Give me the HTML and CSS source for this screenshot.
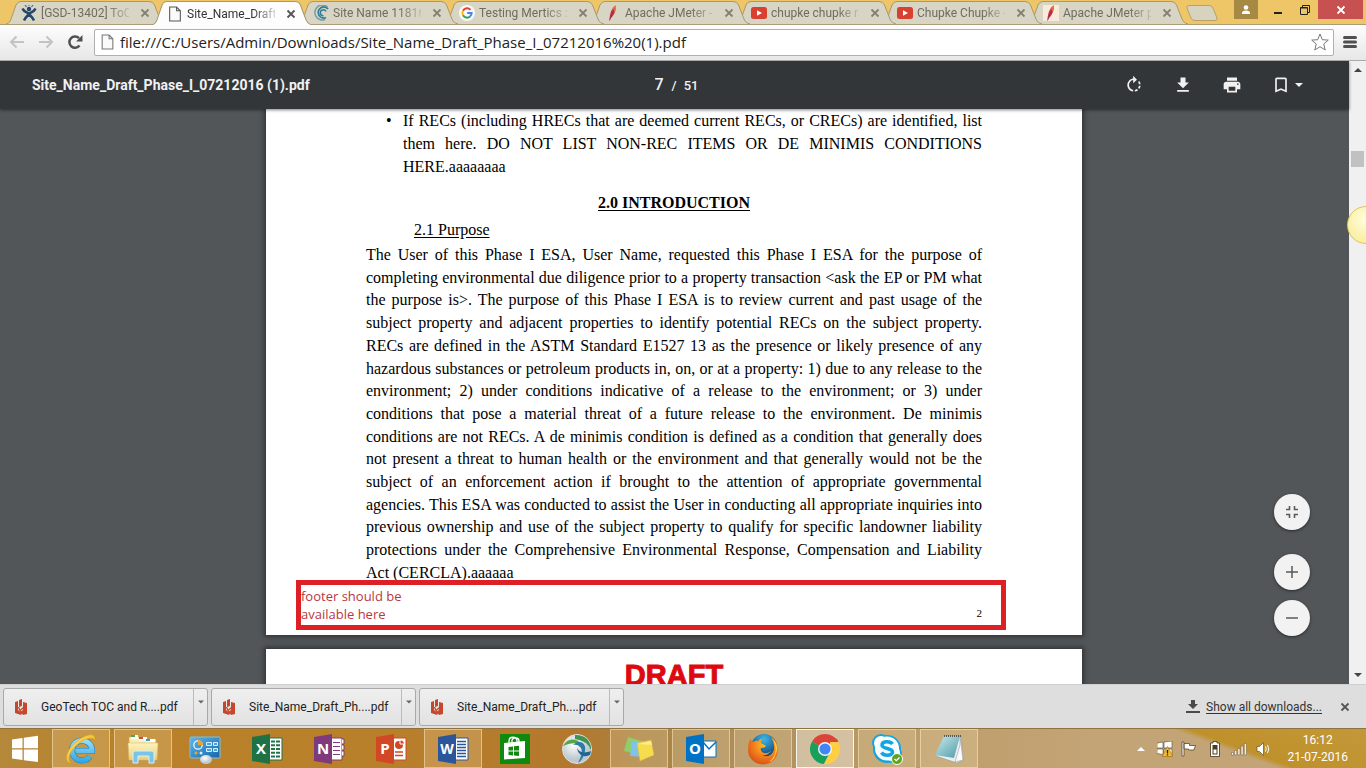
FILE: index.html
```html
<!DOCTYPE html>
<html lang="en">
<head>
<meta charset="utf-8">
<title>Site_Name_Draft_Phase_I_07212016 (1).pdf</title>
<link rel="stylesheet" href="styles.css">
</head>
<body>
<svg class="defs" aria-hidden="true">
  <defs>
    <linearGradient id="gold" x1="0" y1="0" x2="1" y2="1"><stop offset="0" stop-color="#ffe46b"/><stop offset="1" stop-color="#e9a20c"/></linearGradient>
    <linearGradient id="iblue" gradientUnits="userSpaceOnUse" x1="0" y1="5" x2="0" y2="30"><stop offset="0" stop-color="#9fe4fb"/><stop offset="1" stop-color="#2fa5e0"/></linearGradient>
    <linearGradient id="folder" x1="0" y1="0" x2="0" y2="1"><stop offset="0" stop-color="#fdf3bc"/><stop offset="1" stop-color="#e9cf7c"/></linearGradient>
    <linearGradient id="panel" x1="0" y1="0" x2="1" y2="1"><stop offset="0" stop-color="#5db7ea"/><stop offset="1" stop-color="#1467ab"/></linearGradient>
    <radialGradient id="ball" cx=".4" cy=".35"><stop offset="0" stop-color="#ffffff"/><stop offset="1" stop-color="#bfc9cf"/></radialGradient>
    <radialGradient id="fox" cx=".6" cy=".3" r=".8"><stop offset="0" stop-color="#ffc829"/><stop offset=".5" stop-color="#f2821c"/><stop offset="1" stop-color="#d5431a"/></radialGradient>
    <radialGradient id="globe" cx=".5" cy=".2" r=".8"><stop offset="0" stop-color="#3fb7e4"/><stop offset="1" stop-color="#0b2f66"/></radialGradient>
    <linearGradient id="pad" x1="0" y1="0" x2="1" y2="1"><stop offset="0" stop-color="#c9ecef"/><stop offset="1" stop-color="#4f9aa5"/></linearGradient>
  </defs>
  <symbol id="tab-shape" viewBox="0 0 160 24" preserveAspectRatio="none"><path d="M0 24C3 23 4 22 5 19L10 5Q11.500 1.500 15 1.500H143Q147 1.500 148.500 5L154 19C155 22 157 23 160 24" stroke="#a9986a" stroke-width="1"/></symbol>
  <symbol id="x" viewBox="0 0 10 10"><path d="M1.500 1.500L8.500 8.500M8.500 1.500L1.500 8.500" fill="none" stroke="currentColor" stroke-width="1.800"/></symbol>
  <symbol id="file" viewBox="0 0 12 15"><path d="M1 1H7.500L11 4.500V14H1ZM7.500 1V4.500H11" fill="#fafafa" stroke="currentColor"/></symbol>
  <symbol id="youtube" viewBox="0 0 16 16"><rect y="2" width="16" height="12" rx="2.500" fill="#d8402f"/><path d="M6 5.200L11 8L6 10.800Z" fill="#fff"/></symbol>
  <symbol id="feather" viewBox="0 0 16 16"><path d="M4.500 15.500C4.500 9 6.500 3 10.500.5C12 3 9.500 10 6 13Z" fill="#c9314b"/><path d="M7.500 5C8.500 3 9.500 1.200 10.500.5C11.300 2 10.800 4 9.800 6.500Z" fill="#ef8136"/><path d="M4.500 15.500L9.300 3.500" stroke="#7f2b63" stroke-width=".7"/></symbol>
  <symbol id="pdf" viewBox="0 0 12 16"><path d="M0 3L3 2V11L7 14L6 16L0 14ZM4 1L7 0V7L4 8ZM8 3L12 4V15L8 16L6 13C8 12 8 10 8 9Z" fill="#c5482c"/><path d="M3.500 8L5 11.500L8.500 8.500M5 11.500L7.500 14" fill="none" stroke="#c5482c" stroke-width="1.300"/></symbol>
  <symbol id="caret" viewBox="0 0 8 4"><path d="M0 0H8L4 4Z" fill="currentColor"/></symbol>
  <symbol id="caret-up" viewBox="0 0 8 4"><path d="M0 4H8L4 0Z" fill="currentColor"/></symbol>
</svg>

<header class="tabstrip">
  <div class="tabs" role="tablist">
    <div class="tab" role="tab"><svg class="tab-bg"><use href="#tab-shape"/></svg>
      <svg class="favicon" viewBox="0 0 16 16"><path d="M1.500 3.500C3 7 6 7.500 8 8.500C10 7.500 13 7 14.500 3.500M8 8.500C7 11.500 5 11 3 15.500M8 8.500C9 11.500 11 11 13 15.500" fill="none" stroke="#23466b" stroke-width="2.500"/><circle cx="8" cy="4" r="2.200" fill="#23466b"/><path d="M4 0L5.500 2M12 0L10.500 2M7 0H9" stroke="#466a8b" stroke-width="1.200"/></svg>
      <span class="tab-title">[GSD-13402] ToC</span><button class="tab-close" aria-label="Close tab"><svg><use href="#x"/></svg></button></div>
    <div class="tab active" role="tab" aria-selected="true"><svg class="tab-bg"><use href="#tab-shape"/></svg>
      <svg class="favicon"><use href="#file"/></svg>
      <span class="tab-title">Site_Name_Draft_</span><button class="tab-close" aria-label="Close tab"><svg><use href="#x"/></svg></button></div>
    <div class="tab" role="tab"><svg class="tab-bg"><use href="#tab-shape"/></svg>
      <svg class="favicon" viewBox="0 0 16 16"><g fill="none" stroke="#2f7d98"><path d="M14.500 2A7.500 7.500 0 1 0 12 14.500" stroke-width="1.500" opacity=".6"/><path d="M15 4A5.500 5.500 0 1 0 13 12.500" stroke-width="1.800"/><path d="M13 6.500A3 3 0 1 0 10.500 10.800" stroke-width="1.500"/></g></svg>
      <span class="tab-title">Site Name 11816</span><button class="tab-close" aria-label="Close tab"><svg><use href="#x"/></svg></button></div>
    <div class="tab" role="tab"><svg class="tab-bg"><use href="#tab-shape"/></svg>
      <svg class="favicon" viewBox="0 0 16 16"><circle cx="8" cy="8" r="8" fill="#f8f8f6"/><g fill="none" stroke-width="2"><path d="M11.500 4.800A4.600 4.600 0 0 0 4 5.700" stroke="#e04335"/><path d="M4 5.700A4.600 4.600 0 0 0 4 10.300" stroke="#f4b819"/><path d="M4 10.300A4.600 4.600 0 0 0 11 11.500" stroke="#35a353"/><path d="M11 11.500A4.600 4.600 0 0 0 12.600 8H8.200" stroke="#4484ee"/></g></svg>
      <span class="tab-title">Testing Mertics :</span><button class="tab-close" aria-label="Close tab"><svg><use href="#x"/></svg></button></div>
    <div class="tab" role="tab"><svg class="tab-bg"><use href="#tab-shape"/></svg>
      <svg class="favicon"><use href="#feather"/></svg>
      <span class="tab-title">Apache JMeter -</span><button class="tab-close" aria-label="Close tab"><svg><use href="#x"/></svg></button></div>
    <div class="tab" role="tab"><svg class="tab-bg"><use href="#tab-shape"/></svg>
      <svg class="favicon"><use href="#youtube"/></svg>
      <span class="tab-title">chupke chupke ra</span><button class="tab-close" aria-label="Close tab"><svg><use href="#x"/></svg></button></div>
    <div class="tab" role="tab"><svg class="tab-bg"><use href="#tab-shape"/></svg>
      <svg class="favicon"><use href="#youtube"/></svg>
      <span class="tab-title">Chupke Chupke -</span><button class="tab-close" aria-label="Close tab"><svg><use href="#x"/></svg></button></div>
    <div class="tab" role="tab"><svg class="tab-bg"><use href="#tab-shape"/></svg>
      <svg class="favicon light"><use href="#feather"/></svg>
      <span class="tab-title">Apache JMeter p</span><button class="tab-close" aria-label="Close tab"><svg><use href="#x"/></svg></button></div>
    <button class="new-tab" aria-label="New tab"><svg viewBox="0 0 32 16"><path d="M3 .5H23Q26 .5 27 3L31 13Q31.500 15.500 29 15.500H9Q6 15.500 5 13L1 3Q.5 .5 3 .5Z" fill="#d8d3bf" stroke="#b5a169"/></svg></button>
  </div>
  <div class="window-controls">
    <button class="user" aria-label="User"><svg viewBox="0 0 10 10"><circle cx="5" cy="2.500" r="2.300" fill="#fff"/><path d="M1 9V8Q1 5.500 5 5.500T9 8V9Z" fill="#fff"/></svg></button>
    <button aria-label="Minimize"><svg viewBox="0 0 10 10"><path d="M1 8H9" stroke="#222" stroke-width="2"/></svg></button>
    <button aria-label="Restore"><svg viewBox="0 0 10 10"><path d="M.5 2.500H7.500V9.500H.5ZM2.500 2.500V.5H9.500V7.500H7.500" fill="none" stroke="#222"/><path d="M.5 3H7.500" stroke="#222"/></svg></button>
    <button class="close" aria-label="Close"><svg><use href="#x"/></svg></button>
  </div>
</header>

<nav class="toolbar">
  <button aria-label="Back"><svg viewBox="0 0 16 14"><path d="M15 7H2M7.500 1.500L2 7L7.500 12.500" fill="none" stroke="#c3c3c3" stroke-width="2"/></svg></button>
  <button aria-label="Forward"><svg viewBox="0 0 16 14"><path d="M1 7H14M8.500 1.500L14 7L8.500 12.500" fill="none" stroke="#c3c3c3" stroke-width="2"/></svg></button>
  <button aria-label="Reload"><svg viewBox="0 0 16 14"><path d="M12.500 10.500A5.600 5.600 0 1 1 12 3.200" fill="none" stroke="#505050" stroke-width="2.500"/><path d="M15.500 0V6.500H9Z" fill="#505050"/></svg></button>
  <label class="omnibox"><svg class="page-icon"><use href="#file"/></svg>
    <input type="text" aria-label="Address" value="file:///C:/Users/Admin/Downloads/Site_Name_Draft_Phase_I_07212016%20(1).pdf">
    <svg class="star" viewBox="0 0 18 18"><path d="M9 1L11.300 6.700L17.300 7.100L12.700 11L14.200 17L9 13.700L3.800 17L5.300 11L.7 7.100L6.700 6.700Z" fill="#fff" stroke="#777"/></svg></label>
  <button class="menu" aria-label="Menu"><svg viewBox="0 0 14 14"><path d="M1.500 2.500H12.500M1.500 7H12.500M1.500 11.500H12.500" stroke="#505050" stroke-width="3" stroke-linecap="round"/></svg></button>
</nav>

<main class="viewer">
  <div class="viewer-body">
    <div class="pdf-toolbar">
      <h1 class="pdf-title">Site_Name_Draft_Phase_I_07212016 (1).pdf</h1>
      <div class="pager"><input type="text" aria-label="Page number" value="7"><span>/</span><span>51</span></div>
      <div class="pdf-actions">
        <button aria-label="Rotate"><svg viewBox="0 0 24 24"><path d="M15.550 5.550L11 1v3.070C7.060 4.560 4 7.920 4 12s3.050 7.440 7 7.930v-2.020c-2.840-.480-5-2.940-5-5.910s2.160-5.430 5-5.910V10l4.550-4.450zM19.930 11c-.170-1.390-.720-2.730-1.620-3.890l-1.420 1.420c.540.750.880 1.600 1.020 2.470h2.020zM13 17.900v2.020c1.390-.170 2.740-.710 3.900-1.610l-1.440-1.440c-.750.540-1.590.890-2.460 1.030zm3.890-2.420l1.420 1.410c.900-1.160 1.450-2.500 1.620-3.890h-2.020c-.140.870-.480 1.720-1.020 2.480z" fill="#f1f1f1"/></svg></button>
        <button aria-label="Download"><svg viewBox="0 0 24 24"><path d="M19 9h-4V3H9v6H5l7 7 7-7zM5 18v2h14v-2H5z" fill="#f1f1f1"/></svg></button>
        <button aria-label="Print"><svg viewBox="0 0 24 24"><path d="M19 8H5c-1.660 0-3 1.340-3 3v6h4v4h12v-4h4v-6c0-1.660-1.340-3-3-3zm-3 11H8v-5h8v5zm3-7c-.550 0-1-.450-1-1s.450-1 1-1 1 .450 1 1-.450 1-1 1zm-1-9H6v4h12V3z" fill="#f1f1f1"/></svg></button>
        <button class="bookmarks" aria-label="Bookmarks"><svg viewBox="0 0 24 24"><path d="M17 3H7c-1.100 0-1.990.900-1.990 2L5 21l7-3 7 3V5c0-1.100-.900-2-2-2zm0 15l-5-2.180L7 18V5h10v13z" fill="#f1f1f1"/></svg><svg class="caret"><use href="#caret"/></svg></button>
      </div>
    </div>
    <div class="pages">
      <article class="page">
        <ul>
          <li><span class="line">If RECs (including HRECs that are deemed current RECs, or CRECs) are identified, list</span>
          <span class="line">them here. DO NOT LIST NON-REC ITEMS OR DE MINIMIS CONDITIONS</span>
          <span class="line last">HERE.aaaaaaaa</span></li>
        </ul>
        <h2>2.0 INTRODUCTION</h2>
        <h3>2.1 Purpose</h3>
        <p>
          <span class="line">The User of this Phase I ESA, User Name, requested this Phase I ESA for the purpose of</span>
          <span class="line">completing environmental due diligence prior to a property transaction &lt;ask the EP or PM what</span>
          <span class="line">the purpose is&gt;. The purpose of this Phase I ESA is to review current and past usage of the</span>
          <span class="line">subject property and adjacent properties to identify potential RECs on the subject property.</span>
          <span class="line">RECs are defined in the ASTM Standard E1527 13 as the presence or likely presence of any</span>
          <span class="line">hazardous substances or petroleum products in, on, or at a property: 1) due to any release to the</span>
          <span class="line">environment; 2) under conditions indicative of a release to the environment; or 3) under</span>
          <span class="line">conditions that pose a material threat of a future release to the environment. De minimis</span>
          <span class="line">conditions are not RECs. A de minimis condition is defined as a condition that generally does</span>
          <span class="line">not present a threat to human health or the environment and that generally would not be the</span>
          <span class="line">subject of an enforcement action if brought to the attention of appropriate governmental</span>
          <span class="line">agencies. This ESA was conducted to assist the User in conducting all appropriate inquiries into</span>
          <span class="line">previous ownership and use of the subject property to qualify for specific landowner liability</span>
          <span class="line">protections under the Comprehensive Environmental Response, Compensation and Liability</span>
          <span class="line last">Act (CERCLA).aaaaaa</span>
        </p>
        <footer class="page-footer">2</footer>
        <div class="note">footer should be<br>available here</div>
      </article>
      <article class="page next"><div class="draft">DRAFT</div></article>
    </div>
    <div class="zoom-controls">
      <button class="fit" aria-label="Fit to page"><svg viewBox="0 0 12 12"><path d="M0 3.500H3.500V0M8.500 0V3.500H12M12 8.500H8.500V12M3.500 12V8.500H0" fill="none" stroke="#5a5a5a" stroke-width="1.600"/></svg></button>
      <button aria-label="Zoom in"><svg viewBox="0 0 12 12"><path d="M0 6H12M6 0V12" stroke="#5a5a5a" stroke-width="1.500"/></svg></button>
      <button aria-label="Zoom out"><svg viewBox="0 0 12 12"><path d="M0 6H12" stroke="#5a5a5a" stroke-width="1.500"/></svg></button>
    </div>
  </div>
  <div class="scrollbar"><svg><use href="#caret-up"/></svg><div class="thumb"></div><svg><use href="#caret"/></svg></div>
  <div class="bubble"></div>
</main>

<section class="downloads">
  <div class="download"><button class="download-file"><svg><use href="#pdf"/></svg>GeoTech TOC and R....pdf</button><button class="download-more" aria-label="More"><svg><use href="#caret"/></svg></button></div>
  <div class="download"><button class="download-file"><svg><use href="#pdf"/></svg>Site_Name_Draft_Ph....pdf</button><button class="download-more" aria-label="More"><svg><use href="#caret"/></svg></button></div>
  <div class="download"><button class="download-file"><svg><use href="#pdf"/></svg>Site_Name_Draft_Ph....pdf</button><button class="download-more" aria-label="More"><svg><use href="#caret"/></svg></button></div>
  <a class="show-all" href="#downloads"><svg viewBox="0 0 14 13"><path d="M5 0H9V4H12L7 9L2 4H5ZM0 11H14V13H0Z" fill="#4a4a4a"/></svg><span>Show all downloads...</span></a>
  <button class="shelf-close" aria-label="Close downloads"><svg><use href="#x"/></svg></button>
</section>

<footer class="taskbar">
  <button class="start" aria-label="Start"><svg viewBox="0 0 28 28"><path d="M1 4.500L11.500 3V13.300H1ZM12.800 2.800L27 .8V13.300H12.800ZM1 14.600H11.500V25L1 23.500ZM12.800 14.600H27V27L12.800 25.200Z" fill="#fff"/></svg></button>
  <div class="apps">
    <button class="open" aria-label="Internet Explorer"><svg viewBox="0 0 32 32"><path d="M25 23.500A10 10 0 1 1 27 18H11" fill="none" stroke="#1d7cc0" stroke-width="6"/><path d="M25 23.500A10 10 0 1 1 27 18H11" fill="none" stroke="url(#iblue)" stroke-width="5"/><path d="M6 30C-2 30 1 16 12 8C21 1 31-1 30 7C27 3 19 6 13 11C6 17 1 26 6 30Z" fill="url(#gold)" stroke="#d79a12" stroke-width=".5"/></svg></button>
    <button class="open" aria-label="File Explorer"><svg viewBox="0 0 32 32"><path d="M2 4H12L14 6H29V26H2Z" fill="url(#folder)" stroke="#c9a850" stroke-width=".7"/><path d="M4 2H11V6H4Z" fill="#fff"/><path d="M4 2H8V4H4Z" fill="#3cae4b"/><path d="M12 4H20V8H12Z" fill="#fff"/><path d="M12 4H16V6H12Z" fill="#d64b3c"/><path d="M19 6H28V9H19Z" fill="#fff"/><path d="M19 6H23V8H19Z" fill="#3c9dd6"/><path d="M1 10H31L30 27H2Z" fill="url(#folder)" stroke="#d6b661" stroke-width=".5"/><path d="M6 30V20Q6 18 8 18H25Q27 18 27 20V30H22V23H11V30Z" fill="#7ac4e8" stroke="#d6f1fc" stroke-width="1"/></svg></button>
    <button aria-label="Control Panel"><svg viewBox="0 0 32 32"><rect x="1" y="4" width="30" height="21" rx="1" fill="url(#panel)" stroke="#7fc0e6"/><circle cx="9" cy="12" r="4.200" fill="none" stroke="#e7f6ff" stroke-width="1.300"/><path d="M9 12V7A5 5 0 0 1 14 12Z" fill="#f0a22e"/><path d="M17.500 9.500H22.500V12.500H17.500ZM24.500 9.500H28.500V12.500H24.500ZM17.500 15.500H22.500V18.500H17.500ZM24.500 15.500H28.500V18.500H24.500Z" fill="#4ba1d8" stroke="#d7f0ff"/><circle cx="7" cy="20" r="1.500" fill="#e9a42a"/><circle cx="12" cy="20" r="1.500" fill="#dfe9ee"/><ellipse cx="17" cy="26.500" rx="6" ry="4.500" fill="url(#ball)"/></svg></button>
    <button aria-label="Excel"><svg viewBox="0 0 32 32"><path d="M15 5H31V27H15Z" fill="#fff" stroke="#217346"/><path d="M20 8.500H29M20 12.200H29M20 16H29M20 19.800H29M20 23.500H29" stroke="#217346" stroke-width="2" stroke-dasharray="4 1"/><path d="M1 4L19 1V31L1 28Z" fill="#1f7244"/><text x="10" y="21" font-size="15">X</text></svg></button>
    <button aria-label="OneNote"><svg viewBox="0 0 32 32"><path d="M15 5H29V27H15Z" fill="#fff" stroke="#80397b"/><path d="M29 6H31V11H29M29 12H31V17H29M29 18H31V23H29" fill="#fff" stroke="#80397b"/><path d="M20 9.500H27M20 13.500H27M20 17.500H27M20 21.500H27" stroke="#80397b"/><path d="M1 4L19 1V31L1 28Z" fill="#80397b"/><text x="10" y="21" font-size="15">N</text></svg></button>
    <button aria-label="PowerPoint"><svg viewBox="0 0 32 32"><path d="M15 5H31V27H15Z" fill="#fff" stroke="#d24726"/><circle cx="24" cy="12" r="4" fill="#d24726"/><path d="M25 11V7A4.500 4.500 0 0 1 29.500 11Z" fill="#d24726" stroke="#fff"/><path d="M20 19H28M20 22.500H28" stroke="#d24726" stroke-width="1.500"/><path d="M1 4L19 1V31L1 28Z" fill="#d24726"/><text x="10" y="21" font-size="15">P</text></svg></button>
    <button class="open" aria-label="Word"><svg viewBox="0 0 32 32"><path d="M15 5H31V27H15Z" fill="#fff" stroke="#2b579a"/><path d="M20 8.500H29M20 11.500H29M20 14.500H29M20 17.500H29M20 20.500H29M20 23.500H29" stroke="#2b579a" stroke-width="1.400"/><path d="M1 4L19 1V31L1 28Z" fill="#2b579a"/><text x="10" y="21" font-size="14">W</text></svg></button>
    <button aria-label="Store"><svg viewBox="0 0 32 32"><path d="M1 1H31V31H1Z" fill="#108a0e"/><path d="M5 10L26 8V25L5 26.500Z" fill="#fff"/><path d="M10 12V8C10 3 18 3 18 8V11M13 10V7C14 4 20 4 20 8V10" fill="none" stroke="#fff" stroke-width="1.300"/><path d="M9.500 14L14 13.500V17.500H9.500ZM15 13.300L20 12.800V17.500H15ZM9.500 18.500H14V22.500L9.500 22ZM15 18.500H20V23L15 22.600Z" fill="#108a0e"/></svg></button>
    <button aria-label="WebEx"><svg viewBox="0 0 32 32"><circle cx="16" cy="16" r="14.500" fill="url(#ball)" stroke="#dde3e6"/><path d="M2 13C7 4 17 5 21 12C15 9 8 10 2 13Z" fill="#58a548"/><path d="M14 2C25 1 31 10 30 17Q27 8 14 6Z" fill="#3f9450"/><path d="M12 12C17 6 26 9 24 18C23 24 20 28 17 30C20 24 22 19 20 15C18 12 15 11 12 12Z" fill="#2c7cab"/><path d="M16 15C18 19 22 21 30 18L29 22C23 25 17 22 16 15Z" fill="#1f6692"/></svg></button>
    <button class="open" aria-label="Sticky Notes"><svg viewBox="0 0 32 32"><path d="M5 4L18 8L13 21L1 18Z" fill="#8fce70"/><path d="M9 8L21 8L20 24L7 23Z" fill="#7fc4e8"/><path d="M14 10L28 7L31 22L17 28Z" fill="#f7dc4d" stroke="#dcb62f" stroke-width=".5"/><path d="M15 11L28 8L29 12Z" fill="#fcec8c"/></svg></button>
    <button class="open" aria-label="Outlook"><svg viewBox="0 0 32 32"><path d="M15 8H31V24H15Z" fill="#fff" stroke="#0072c6"/><path d="M18 9L24 16L31 9M17 24V20" fill="none" stroke="#0072c6" stroke-width="1.500"/><path d="M1 4L19 1V31L1 28Z" fill="#0072c6"/><text x="10" y="21" font-size="15">O</text></svg></button>
    <button class="open" aria-label="Firefox"><svg viewBox="0 0 32 32"><circle cx="17" cy="14" r="13" fill="url(#globe)"/><path d="M3 6L6 9Q8 7 11 8Q14 5 15 6L14 10L19 13Q18 15 14 15Q13 17 15 19Q19 22 24 18Q21 23 15 22Q23 26 27 17Q28 10 24 4Q31 9 31 17A15 14.500 0 0 1 1 17Q1 11 3 6Z" fill="url(#fox)"/><path d="M25 5Q33 13 28 23Q27 27 22 29Q31 22 28 12Q28 8 25 5Z" fill="#ffd84a"/></svg></button>
    <button class="open current" aria-label="Chrome"><svg viewBox="0 0 32 32"><path d="M16 16L3 8.500A15 15 0 0 1 29 8.500Z" fill="#db4437"/><path d="M3 8.500A15 15 0 0 0 15 31L21 19L16 16Z" fill="#189f5b"/><path d="M29 8.500A15 15 0 0 1 15 31L21.500 19L21 8.500Z" fill="#ffce42"/><path d="M16 9H29.300L28 6L16 3Z" fill="#db4437"/><circle cx="16" cy="16" r="7" fill="#f5f5f5"/><circle cx="16" cy="16" r="5.600" fill="#4285f4"/></svg></button>
    <button class="open" aria-label="Skype"><svg viewBox="0 0 32 32"><circle cx="10" cy="10" r="9" fill="#12a5e3"/><circle cx="22" cy="21" r="9" fill="#12a5e3"/><circle cx="16" cy="16" r="14" fill="#12a5e3"/><circle cx="10" cy="10" r="7" fill="#fff"/><circle cx="21" cy="20" r="8" fill="#fff"/><circle cx="16" cy="15.500" r="12" fill="#fff"/><circle cx="16" cy="15.500" r="10.500" fill="#f4fbfe"/><path d="M21.500 11C19 7.500 11 8 11 12C11 16.500 21.500 14.500 21.500 19C21.500 23 13 23.500 10.500 19.500" fill="none" stroke="#12a5e3" stroke-width="3.500"/><circle cx="26" cy="26" r="5.500" fill="#5ea321" stroke="#fff"/><path d="M23.500 26L25.300 27.700L28.500 24.500" fill="none" stroke="#fff" stroke-width="1.300"/></svg></button>
    <button class="open" aria-label="Notepad"><svg viewBox="0 0 32 32"><path d="M11 3H28L30 27L24 30L3 23Z" fill="#e9efef" stroke="#8d9ba0" stroke-width=".6"/><path d="M11 3H27L21 25L2 22Z" fill="url(#pad)"/><path d="M27 3L30 27L22 29L27 12Z" fill="#fafafa" stroke="#9a9a9a" stroke-width=".6"/><path d="M11 3H28" stroke="#525a5c" stroke-width="2" stroke-dasharray="1 1"/></svg></button>
  </div>
  <div class="tray">
    <svg class="tray-caret"><use href="#caret-up"/></svg>
    <svg viewBox="0 0 16 16"><path d="M0 2L6 1V7H0ZM7 1L15 0V7H7ZM0 8H6V13.500L0 12.500ZM7 8H15V14.500L7 13.700Z" fill="#fff" stroke="#5c4a28" stroke-width=".6"/><path d="M10.500 5.500L16 15.500H5Z" fill="#f7b928" stroke="#936c12" stroke-width=".6"/><path d="M10.500 9V12.500M10.500 13.300V14.500" stroke="#222" stroke-width="1.300"/></svg>
    <svg class="flag" viewBox="0 0 16 16"><path d="M1 1H3V15H1ZM3 2.500H8.500V4.500H14.500L13 9H7.500V8H3Z" fill="#fff" stroke="#5c4a28" stroke-width=".8"/></svg>
    <svg viewBox="0 0 16 16"><path d="M6 .5H10V2H12.500V15.500H3.500V2H6Z" fill="#fff" stroke="#3c321e" stroke-width=".8"/><path d="M5.500 4H10.500V13.500H5.500Z" fill="#4d3b1b"/><path d="M6.500 8.500H9.500V12.500H6.500Z" fill="#fff"/></svg>
    <svg viewBox="0 0 16 16"><path d="M.5 11.500H2.500V14H.5ZM3.700 9.500H5.700V14H3.700ZM6.900 7.500H8.900V14H6.900ZM10.100 5H12.100V14H10.100ZM13.300 2.500H15.300V14H13.300Z" fill="#fff" stroke="#6a5226" stroke-width=".5"/></svg>
    <svg viewBox="0 0 16 16"><path d="M2 5.500H4.500L8.500 1.500V14.500L4.500 10.500H2Z" fill="#fff" stroke="#6a5226" stroke-width=".7"/><path d="M10.500 5.500Q12 8 10.500 10.500M12.500 4Q15 8 12.500 12" fill="none" stroke="#fff"/></svg>
    <div class="clock"><time>16:12</time><time>21-07-2016</time></div>
  </div>
</footer>
</body>
</html>
```
FILE: styles.css
```css
* { box-sizing: border-box; }

body {
  margin: 0;
  height: 100vh;
  display: flex;
  flex-direction: column;
  overflow: hidden;
  font-family: Roboto, "Open Sans", sans-serif;
  font-size: 12px;
  color: #222;
}

button {
  display: flex;
  align-items: center;
  justify-content: center;
  padding: 0;
  border: 0;
  background: none;
  font: inherit;
  color: inherit;
}

svg { display: block; flex: none; }
.defs { position: absolute; width: 0; height: 0; }

/* Tab strip */
.tabstrip {
  display: flex;
  justify-content: space-between;
  height: 25px;
  background: #efc667;
  border-bottom: 1px solid #a99c76;
}
.tabs { display: flex; flex: 1; min-width: 0; padding-left: 6px; }
.tab {
  position: relative;
  display: flex;
  align-items: center;
  flex: 0 1 160px;
  min-width: 0;
  height: 24px;
  margin-right: -14px;
  padding: 2px 13px 0 15px;
  color: #6f6c60;
}
.tab:nth-child(1) { z-index: 8; }
.tab:nth-child(3) { z-index: 7; }
.tab:nth-child(4) { z-index: 6; }
.tab:nth-child(5) { z-index: 5; }
.tab:nth-child(6) { z-index: 4; }
.tab:nth-child(7) { z-index: 3; }
.tab:nth-child(8) { z-index: 2; }
.tab.active { z-index: 9; height: 25px; color: #333; }
.tab-bg { position: absolute; inset: 0; z-index: -1; width: 100%; height: 100%; fill: #d9d5c4; }
.active .tab-bg { fill: #fdfdfd; }
.favicon { width: 16px; height: 16px; color: #555; }
.favicon.light { background: #f8ecd8; }
.tab-title {
  flex: 1;
  min-width: 0;
  margin-left: 4px;
  white-space: nowrap;
  mask-image: linear-gradient(to right, #000 75%, rgba(0, 0, 0, .2));
}
.tab-close { width: 16px; height: 16px; margin-left: 8px; color: #858172; }
.active .tab-close { color: #555; }
.tab-close svg { width: 10px; height: 10px; }
.new-tab { width: 32px; height: 16px; margin: 5px 0 0 12px; }
.new-tab svg { width: 32px; height: 16px; }

.window-controls { display: flex; align-items: flex-start; padding-right: 3px; }
.window-controls button { width: 27px; height: 19px; }
.window-controls svg { width: 10px; height: 10px; }
.window-controls .user { width: 24px; background: #a68a44; margin-right: 6px; }
.window-controls .close { width: 45px; background: #c75050; color: #fff; }

/* Address bar */
.toolbar {
  display: flex;
  align-items: center;
  height: 36px;
  padding: 0 9px 1px;
  gap: 13px;
  background: linear-gradient(#fdfdfd, #e7e7e7);
  border-bottom: 1px solid #aaa;
}
.toolbar button svg { width: 16px; height: 14px; }
.omnibox {
  display: flex;
  align-items: center;
  flex: 1;
  height: 27px;
  margin-right: -4px;
  margin-left: -2px;
  padding: 0 4px 0 6px;
  border: 1px solid #b0b0b0;
  border-radius: 2px;
  background: #fff;
}
.page-icon { width: 13px; height: 16px; color: #777; }
.omnibox input {
  flex: 1;
  min-width: 0;
  margin-left: 6px;
  padding: 0;
  border: 0;
  outline: 0;
  background: none;
  font: 15px/22px "Open Sans", sans-serif;
  color: #222;
}
.star { width: 18px; height: 18px; }
.toolbar .menu svg { width: 14px; height: 14px; }

/* PDF viewer */
.viewer { position: relative; display: flex; flex: 1; min-height: 0; overflow: hidden; background: #525659; }
.viewer-body { position: relative; display: flex; flex-direction: column; flex: 1; min-width: 0; }
.pdf-toolbar {
  display: grid;
  grid-template-columns: 1fr auto 1fr;
  align-items: center;
  flex: none;
  height: 48px;
  padding: 0 46px 0 32px;
  background: #323639;
  color: #f1f1f1;
  font-weight: 500;
  box-shadow: 0 1px 3px rgba(0, 0, 0, .5);
  z-index: 1;
}
.pdf-title { margin: 0; font-size: 14px; font-weight: 700; white-space: nowrap; }
.pager { display: flex; align-items: center; gap: 7px; margin-left: 18px; font-size: 13px; }
.pager input {
  width: 10px;
  padding: 0;
  border: 0;
  background: none;
  color: inherit;
  font: 500 16px/20px Roboto, sans-serif;
}
.pdf-actions { display: flex; justify-content: flex-end; gap: 29px; }
.pdf-actions svg { width: 20px; height: 20px; }
.pdf-actions .bookmarks { gap: 4px; }
.pdf-actions .caret { width: 8px; height: 4px; color: #f1f1f1; }

.pages { flex: 1; min-height: 0; padding-right: 1px; overflow: hidden; }
.page {
  position: relative;
  max-width: 816px;
  margin: 0 auto 14px;
  padding: 0 100px;
  background: #fff;
  color: #000;
  box-shadow: 0 0 5px 2px rgba(0, 0, 0, .4);
  font: 16px/23px "Liberation Serif", "Times New Roman", serif;
}
.page ul { margin: 0; padding-left: 37px; list-style: none; }
.page li { position: relative; }
.page li::before { content: "•"; position: absolute; left: -17px; }
.line { display: block; text-align: justify; text-align-last: justify; white-space: nowrap; }
.line.last { text-align-last: left; }
.page h2 { margin: 13px 0 4px; font-size: 16px; text-align: center; text-decoration: underline; text-underline-offset: 2px; }
.page h3 { margin: 0 0 3px 48px; font-size: 16px; font-weight: 400; text-decoration: underline; text-underline-offset: 2px; }
.page p {
  display: grid;
  align-content: space-between;
  min-height: 340px;
  margin: 0;
  line-height: 22px;
}
.page-footer { padding: 23px 0 16px; font-size: 11px; line-height: 12px; text-align: right; }
.note {
  position: absolute;
  left: 30px;
  right: 76px;
  bottom: 5px;
  height: 50px;
  padding-top: 2px;
  border: 5px solid #dd1f26;
  font: 13px/18px "Open Sans", sans-serif;
  color: #b9373f;
}
.page.next { margin-bottom: 0; padding-top: 9px; }
.draft {
  font: 700 29px/34px "Liberation Sans", Arial, sans-serif;
  text-align: center;
  color: #dc0a10;
  -webkit-text-stroke: 1px #dc0a10;
}

.zoom-controls { position: absolute; right: 39px; bottom: 48px; display: flex; flex-direction: column; gap: 10px; }
.zoom-controls button {
  width: 36px;
  height: 36px;
  border-radius: 50%;
  background: #f2f2f2;
  box-shadow: 0 1px 3px rgba(0, 0, 0, .5);
}
.zoom-controls .fit { margin-bottom: 14px; }
.zoom-controls svg { width: 12px; height: 12px; }

.scrollbar {
  display: flex;
  flex-direction: column;
  align-items: center;
  width: 17px;
  padding: 7px 0;
  background: #f0f0f0;
  color: #444;
}
.scrollbar svg { width: 8px; height: 4px; }
.thumb { width: 13px; height: 16px; margin: 79px 0 auto; background: #c1c1c1; }
.bubble {
  position: absolute;
  top: 145px;
  right: -19px;
  width: 38px;
  height: 38px;
  border: 1px solid #dfc45a;
  border-radius: 50%;
  background: radial-gradient(circle at 50% 35%, #fffde0, #f8ea8c);
}

/* Downloads shelf */
.downloads {
  display: flex;
  align-items: center;
  gap: 3px;
  height: 44px;
  padding: 0 13px 0 3px;
  background: #dedede;
  border-top: 1px solid #cfcfcf;
}
.download {
  display: flex;
  width: 205px;
  height: 38px;
  border: 1px solid #a9a9a9;
  border-radius: 3px;
  background: linear-gradient(#efefef, #e2e2e2);
  white-space: nowrap;
}
.download-file { flex: 1; justify-content: flex-start; gap: 14px; padding-left: 11px; }
.download-file svg { width: 12px; height: 16px; }
.download-more { width: 14px; padding-bottom: 10px; border-left: 1px solid #bbb; color: #666; }
.download-more svg { width: 6px; height: 4px; }
.show-all { display: flex; align-items: center; gap: 6px; margin-left: auto; color: #333; text-decoration: none; white-space: nowrap; }
.show-all span { text-decoration: underline; text-underline-offset: 2px; }
.show-all svg { width: 14px; height: 13px; }
.shelf-close { width: 16px; height: 16px; margin-left: 12px; color: #555; }
.shelf-close svg { width: 10px; height: 10px; }

/* Taskbar */
.taskbar {
  display: flex;
  height: 40px;
  background: linear-gradient(90deg, #b5883a 0%, #b98129 8%, #b9802b 28%, #b3782d 42%, #a98447 48%, #ae8f5c 55%, #bc9c68 66%, #c3a476 80%, #c3a476 100%);
  border-top: 1px solid #8f7240;
}
.start { width: 48px; padding-left: 2px; }
.start svg { width: 28px; height: 28px; }
.apps { display: flex; gap: 4px; margin-left: 4px; }
.apps button { width: 58px; height: 39px; }
.apps svg { width: 32px; height: 32px; }
.apps .open { border: 1px solid rgba(255, 240, 200, .5); background: rgba(255, 240, 200, .2); }
.apps .current { border-color: rgba(255, 255, 255, .85); background: rgba(255, 255, 255, .4); }
.apps text { fill: #fff; font-family: "Open Sans", sans-serif; font-weight: 700; text-anchor: middle; }
.tray {
  display: flex;
  align-items: center;
  gap: 8px;
  margin-left: auto;
  padding-right: 18px;
  background: linear-gradient(20deg, transparent 42%, #bf912b 47%, #c3983a 100%);
  color: #fff;
}
.tray svg { width: 16px; height: 16px; }
.tray .tray-caret { width: 8px; height: 4px; margin-right: 4px; }
.tray .flag { margin-right: 2px; }
.clock { display: flex; flex-direction: column; align-items: center; margin-left: 8px; line-height: 17px; }
```
